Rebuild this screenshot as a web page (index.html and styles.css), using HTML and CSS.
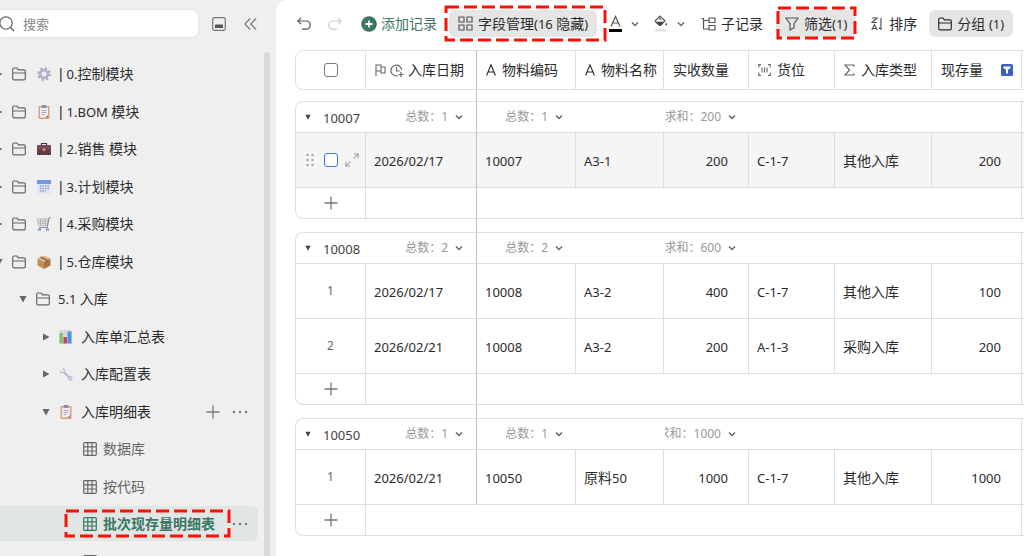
FILE: index.html
```html
<!DOCTYPE html>
<html lang="zh-CN">
<head>
  <meta charset="UTF-8" />
  <title>批次现存量明细表</title>
  <link rel="stylesheet" href="styles.css">
</head>
<body>
  <svg class="sprite" aria-hidden="true">
    <symbol id="folder" viewBox="0 0 14 14"><path d="M.7 11.2V2.4Q.7 1 2.1 1H5l1.6 1.8h5.3q1.4 0 1.4 1.4v7.2q0 1.4-1.4 1.4H2.1Q.7 12.800.7 11.200M.7 6h12.600" fill="none" stroke="currentColor" stroke-width="1.200" /></symbol>
    <symbol id="grid" viewBox="0 0 14 14"><path d="M1.700.7h10.600q1 0 1 1v10.600q0 1-1 1H1.700q-1 0-1-1V1.700q0-1 1-1zM4.800.7v12.600M9 .7v12.600M.7 4.800h12.600M.7 9h12.600" fill="none" stroke="currentColor" stroke-width="1.200" /></symbol>
    <symbol id="right" viewBox="0 0 8 8"><path d="M1 0.500 7.500 4 1 7.500z" fill="currentColor" /></symbol>
    <symbol id="down" viewBox="0 0 8 8"><path d="M.5 1h7L4 7.500z" fill="currentColor" /></symbol>
    <symbol id="chevron" viewBox="0 0 8 8"><path d="M1 2.500 4 5.500 7 2.500" fill="none" stroke="currentColor" stroke-width="1.500" /></symbol>
    <symbol id="plus" viewBox="0 0 14 14"><path d="M7 .5v13M.5 7h13" fill="none" stroke="currentColor" stroke-width="1.300" /></symbol>
    <symbol id="dots" viewBox="0 0 16 14"><g fill="currentColor"><circle cx="2" cy="7" r="1.200" /><circle cx="8" cy="7" r="1.200" /><circle cx="14" cy="7" r="1.200" /></g></symbol>
    <symbol id="text" viewBox="0 0 10 12"><path d="M.6 11.500 5 .8l4.400 10.700M2 8h6" fill="none" stroke="currentColor" stroke-width="1.100" /></symbol>
    <symbol id="clipboard" viewBox="0 0 14 14"><rect x="1.500" y="1" width="11" height="13" rx="1" fill="#d9a27c" /><path d="M3 2.500h8V10l-2.500 2.500H3z" fill="#f1eef8" /><path d="M11 10v2.500H8.500z" fill="#c07a48" /><rect x="4.500" width="5" height="3" rx="1" fill="#8f8ba3" /><path d="M4.500 5.500h5M4.500 7.500h5M4.500 9.500h3" stroke="#a9a3c0" /></symbol>
  </svg>

  <aside class="sidebar">
    <div class="search-bar">
      <label class="search">
        <svg width="15" height="16" viewBox="0 0 15 16"><circle cx="6" cy="7" r="6.200" fill="none" stroke="#666" stroke-width="1.300" /><path d="m10.500 11.500 3.500 3.500" stroke="#666" stroke-width="1.400" /></svg>
        <input type="search" placeholder="搜索" aria-label="搜索" />
      </label>
      <button class="icon-button" aria-label="面板"><svg width="14" height="14" viewBox="0 0 14 14"><rect x=".7" y=".7" width="12.600" height="12.600" rx="1.500" fill="none" stroke="#777" stroke-width="1.200" /><path d="M3 7.500h8v3.500H3z" fill="#555" /></svg></button>
      <button class="icon-button" aria-label="收起"><svg width="13" height="12" viewBox="0 0 13 12"><path d="M6.200.5.8 6l5.400 5.500M12.200.5 6.800 6l5.400 5.500" fill="none" stroke="#777" stroke-width="1.200" /></svg></button>
    </div>

    <div class="tree-wrap">
      <ul class="tree">
        <li><a href="#"><svg class="caret"><use href="#right" /></svg><svg class="icon module"><use href="#folder" /></svg><svg class="emoji" viewBox="0 0 14 14"><circle cx="7" cy="7" r="5.600" fill="none" stroke="#aaa4c2" stroke-width="2.400" stroke-dasharray="2.200" /><circle cx="7" cy="7" r="3.800" fill="none" stroke="#b3adca" stroke-width="2.600" /></svg><span><span class="bar">| </span><span class="num">0.</span>控制模块</span></a></li>
        <li><a href="#"><svg class="caret"><use href="#right" /></svg><svg class="icon module"><use href="#folder" /></svg><svg class="emoji"><use href="#clipboard" /></svg><span><span class="bar">| </span><span class="num">1.BOM </span>模块</span></a></li>
        <li><a href="#"><svg class="caret"><use href="#right" /></svg><svg class="icon module"><use href="#folder" /></svg><svg class="emoji" viewBox="0 0 14 14"><path d="M4.500 3V1.500h5V3" fill="none" stroke="#4a3038" stroke-width="1.200" /><rect y="3" width="14" height="10" rx="1.200" fill="#774b55" /><path d="M0 7.500h14V12q0 1-1 1H1q-1 0-1-1z" fill="#613b46" /><rect x="5.500" y="6.500" width="3" height="2.200" fill="#e3a05b" /></svg><span><span class="bar">| </span><span class="num">2.</span>销售 模块</span></a></li>
        <li><a href="#"><svg class="caret"><use href="#right" /></svg><svg class="icon module"><use href="#folder" /></svg><svg class="emoji" viewBox="0 0 14 14"><rect x=".5" y=".5" width="13" height="13" rx="1" fill="#dfe2f3" /><path d="M0 0h14v4H0z" fill="#6c9be0" /><path d="M3 6h9M3 8.500h9M3 11h6" stroke="#8da3d2" stroke-width="1.500" stroke-dasharray="1.500 1" /></svg><span><span class="bar">| </span><span class="num">3.</span>计划模块</span></a></li>
        <li><a href="#"><svg class="caret"><use href="#right" /></svg><svg class="icon module"><use href="#folder" /></svg><svg class="emoji" viewBox="0 0 14 14"><path d="M.5 2h10.800l-1 6.500H1.500zM.8 4.200h10M1.200 6.300h9M3.500 2v6.500M6 2v6.500M8.500 2v6.500" fill="none" stroke="#aaa9b3" stroke-width=".8" /><path d="M14 .8h-2l-1.700 9.700H2" fill="none" stroke="#88879a" /><path d="M1 12.500h3M9 12.500h3" stroke="#6b94d6" stroke-width="2" /></svg><span><span class="bar">| </span><span class="num">4.</span>采购模块</span></a></li>
        <li><a href="#"><svg class="caret"><use href="#down" /></svg><svg class="icon module"><use href="#folder" /></svg><svg class="emoji" viewBox="0 0 14 14"><path d="m7 .5 6.500 3L7 7 .5 3.500z" fill="#dfb283" /><path d="M.5 3.500 7 7v7L.5 10.500z" fill="#c48e5b" /><path d="M13.500 3.500 7 7v7l6.500-3.500z" fill="#a97343" /><path d="m3.500 2 6.500 3.500V8" fill="none" stroke="#89603c" stroke-width="1.300" /></svg><span><span class="bar">| </span><span class="num">5.</span>仓库模块</span></a></li>
        <li class="level-1"><a href="#"><svg class="caret"><use href="#down" /></svg><svg class="icon"><use href="#folder" /></svg><span><span class="num">5.1 </span>入库</span></a></li>
        <li class="level-2"><a href="#"><svg class="caret"><use href="#right" /></svg><svg class="emoji" viewBox="0 0 14 14"><rect width="13" height="14" rx="1" fill="#d6d7e2" /><path d="M.5 3h3.500v10.500H.5z" fill="#7fc95c" /><path d="M4.500 7H8v6.500H4.500z" fill="#cd3e68" /><path d="M8.500 1.500h4v12h-4z" fill="#4d96e3" /></svg><span>入库单汇总表</span></a></li>
        <li class="level-2"><a href="#"><svg class="caret"><use href="#right" /></svg><svg class="emoji" viewBox="0 0 14 14"><path d="m4.500 5 6 5.500" stroke="#bdb9d4" stroke-width="2.200" /><path d="M3.500 1.500 5.500 3 5 5.500l-2.500.2L1 4M9.800 9.500l2.700.7.500 2-1.200 1-2.300-1z" fill="none" stroke="#bdb9d4" stroke-width="1.300" /></svg><span>入库配置表</span></a></li>
        <li class="level-2"><a href="#"><svg class="caret"><use href="#down" /></svg><svg class="emoji"><use href="#clipboard" /></svg><span>入库明细表</span></a>
          <button class="icon-button" aria-label="新建"><svg width="14" height="14"><use href="#plus" /></svg></button>
          <button class="icon-button" aria-label="更多"><svg width="16" height="14"><use href="#dots" /></svg></button></li>
        <li class="level-3"><a href="#"><svg class="icon"><use href="#grid" /></svg><span>数据库</span></a></li>
        <li class="level-3"><a href="#"><svg class="icon"><use href="#grid" /></svg><span>按代码</span></a></li>
        <li class="level-3 active"><a href="#"><svg class="icon"><use href="#grid" /></svg><span>批次现存量明细表</span></a>
          <button class="icon-button" aria-label="更多"><svg width="16" height="14"><use href="#dots" /></svg></button>
          <svg class="mark mark-view"><rect x="2" y="2" width="163" height="25" /></svg></li>
        <li class="level-3"><a href="#" aria-label="视图"><svg class="icon"><use href="#grid" /></svg></a></li>
      </ul>
      <div class="scrollbar"></div>
    </div>
  </aside>

  <main class="main">
    <div class="toolbar">
      <button class="tool undo" aria-label="撤销"><svg width="14" height="14" viewBox="0 0 14 14"><path d="M4 .8.8 4 4 7.200M1 4h8.500q3.700.5 3.700 4t-3.700 4.200H5" fill="none" stroke="#555" stroke-width="1.200" /></svg></button>
      <button class="tool redo" aria-label="重做"><svg width="14" height="14" viewBox="0 0 14 14"><path d="M10 .8 13.200 4 10 7.200M13 4H4.500Q.8 4.500.8 8t3.700 4.200H9" fill="none" stroke="#ccc" stroke-width="1.200" /></svg></button>
      <button class="tool add"><svg width="16" height="16" viewBox="0 0 16 16"><circle cx="8" cy="8" r="7.800" fill="#3b7566" /><path d="M8 4.500v7M4.500 8h7" stroke="#fff" stroke-width="1.800" /></svg>添加记录</button>
      <button class="tool filled fields"><svg width="15" height="15" viewBox="0 0 15 15"><path d="M1 1h5v5H1zM9 1h5v5H9zM1 9h5v5H1zM9 9h5v5H9z" fill="none" stroke="#555" stroke-width="1.200" /></svg><span>字段管理<span class="num">(16 </span>隐藏<span class="num">)</span></span><svg class="mark mark-fields"><rect x="2" y="2" width="159" height="33" /></svg></button>
      <button class="tool color" aria-label="文字颜色"><svg width="13" height="17" viewBox="0 0 13 17"><path d="M2 11.500 6.500 1.500l4.500 10M3.500 8h6" fill="none" stroke="#555" stroke-width="1.200" /><path d="M0 14h13v3H0z" fill="#000" /></svg><svg class="chev"><use href="#chevron" /></svg></button>
      <button class="tool color" aria-label="填充颜色"><svg width="14" height="17" viewBox="0 0 14 17"><path d="M4.500 2.500 6 1l5 4.800-4.200 4.400q-.8.600-1.600 0L1.600 6.800q-.5-.7 0-1.400L5 2.500 7 5" fill="none" stroke="#555" stroke-width="1.200" /><path d="M2 6.800h8L6 10.500z" fill="#444" /><path d="M12.300 7.500q1.600 2.500 0 3-1.700-.5 0-3z" fill="#444" /><path d="M.5 14h12v2.500H.5z" fill="#e4e4e4" /></svg><svg class="chev"><use href="#chevron" /></svg></button>
      <button class="tool child"><svg width="15" height="14" viewBox="0 0 15 14"><path d="M.5 1.500h2v10.500h5M2.500 3.500h5M8 1h6v4.500H8zM8 8.500h6V13H8z" fill="none" stroke="#555" stroke-width="1.200" /></svg>子记录</button>
      <button class="tool filled filter"><svg width="14" height="14" viewBox="0 0 14 14"><path d="M.8 1h12.400L9 6.700v4L5 13V6.700z" fill="none" stroke="#555" stroke-width="1.200" stroke-linejoin="round" /></svg><span>筛选<span class="num">(1)</span></span><svg class="mark mark-filter"><rect x="2" y="2" width="77" height="30" /></svg></button>
      <button class="tool sort"><svg width="13" height="14" viewBox="0 0 13 14"><path d="M1 1h5L1 5.500h5M.8 13l2.700-5.500L6.200 13M1.800 11.500h3.500M10 1v11.500M7.800 10.500l2.200 2.200" fill="none" stroke="#555" stroke-width="1.200" /></svg>排序</button>
      <button class="tool filled group"><svg width="14" height="14"><use href="#folder" /></svg><span>分组 <span class="num">(1)</span></span></button>
    </div>

    <table class="records">
      <colgroup>
        <col class="w-index"><col class="w-date"><col class="w-code"><col class="w-name"><col class="w-qty"><col class="w-place"><col class="w-type"><col class="w-stock"><col>
      </colgroup>
      <thead>
        <tr>
          <th class="index"><input type="checkbox" aria-label="全选" /></th>
          <th class="frozen"><div class="field date"><svg width="11" height="12" viewBox="0 0 11 12"><path d="M1 12V1h5v6H1M6 3h4v6H6V7" fill="none" stroke="#666" stroke-width="1.100" /></svg><svg width="14" height="13" viewBox="0 0 14 13"><path d="M8 11.700A5.400 5.400 0 1 1 11.700 6M6.500 3v4h3M11 8v5M8.500 10.500h5" fill="none" stroke="#666" stroke-width="1.200" /></svg>入库日期</div></th>
          <th><div class="field"><svg width="10" height="12"><use href="#text" /></svg>物料编码</div></th>
          <th><div class="field"><svg width="10" height="12"><use href="#text" /></svg>物料名称</div></th>
          <th><div class="field">实收数量</div></th>
          <th><div class="field"><svg width="13" height="12" viewBox="0 0 13 12"><path d="M3 .6H.8v3M10 .6h2.200v3M3 11.400H.8v-3M10 11.400h2.200v-3M4 3.500v5M6.500 3.500v5M9 3.500v5" fill="none" stroke="#666" stroke-width="1.100" /></svg>货位</div></th>
          <th><div class="field"><svg width="11" height="12" viewBox="0 0 11 12"><path d="M10 2.800V1H1l4.500 5L1 11h9V9.200" fill="none" stroke="#666" stroke-width="1.200" /></svg>入库类型</div></th>
          <th><div class="field">现存量<svg class="filtered" width="12" height="12" viewBox="0 0 12 12"><rect width="12" height="12" rx="1.500" fill="#3f5fc0" /><path d="M2.500 2.500h7v1.500L7 5.800V9.500H5V5.800L2.500 4z" fill="#fff" /></svg></div></th>
          <th></th>
        </tr>
      </thead>
      <tbody>
        <tr class="gap first"><td colspan="2" class="frozen"></td><td colspan="7"></td></tr>
        <tr class="group-head">
          <td colspan="2" class="frozen"><div class="group-title"><svg class="caret"><use href="#down" /></svg><span>10007</span><button class="stat"><span>总数：1</span><svg class="chev"><use href="#chevron" /></svg></button></div></td>
          <td><button class="stat"><span>总数：1</span><svg class="chev"><use href="#chevron" /></svg></button></td><td></td>
          <td><button class="stat"><span>求和：200</span><svg class="chev"><use href="#chevron" /></svg></button></td><td></td><td></td><td class="edge"></td><td></td>
        </tr>
        <tr class="record hover">
          <td class="index"><div class="row-tools"><svg width="8" height="14" viewBox="0 0 8 14"><g fill="#aaa"><circle cx="1.500" cy="2" r="1.300" /><circle cx="6.500" cy="2" r="1.300" /><circle cx="1.500" cy="7" r="1.300" /><circle cx="6.500" cy="7" r="1.300" /><circle cx="1.500" cy="12" r="1.300" /><circle cx="6.500" cy="12" r="1.300" /></g></svg><input type="checkbox" aria-label="选择记录" /><svg width="14" height="14" viewBox="0 0 14 14"><path d="M8.500 5.500 13 1M9 .8h4.200V5M5.500 8.500 1 13M.8 9v4.200H5" fill="none" stroke="#aaa" stroke-width="1.200" /></svg></div></td>
          <td class="frozen num">2026/02/17</td><td class="num">10007</td><td class="num">A3-1</td><td class="num right">200</td><td class="num">C-1-7</td><td>其他入库</td><td class="num right">200</td><td></td>
        </tr>
        <tr class="append"><td class="index"><button class="icon-button" aria-label="添加记录"><svg width="14" height="14"><use href="#plus" /></svg></button></td><td class="frozen"></td><td colspan="6" class="edge"></td><td></td></tr>
      </tbody>
      <tbody>
        <tr class="gap"><td colspan="2" class="frozen"></td><td colspan="7"></td></tr>
        <tr class="group-head">
          <td colspan="2" class="frozen"><div class="group-title"><svg class="caret"><use href="#down" /></svg><span>10008</span><button class="stat"><span>总数：2</span><svg class="chev"><use href="#chevron" /></svg></button></div></td>
          <td><button class="stat"><span>总数：2</span><svg class="chev"><use href="#chevron" /></svg></button></td><td></td>
          <td><button class="stat"><span>求和：600</span><svg class="chev"><use href="#chevron" /></svg></button></td><td></td><td></td><td class="edge"></td><td></td>
        </tr>
        <tr class="record">
          <td class="index">1</td><td class="frozen num">2026/02/17</td><td class="num">10008</td><td class="num">A3-2</td><td class="num right">400</td><td class="num">C-1-7</td><td>其他入库</td><td class="num right">100</td><td></td>
        </tr>
        <tr class="record">
          <td class="index">2</td><td class="frozen num">2026/02/21</td><td class="num">10008</td><td class="num">A3-2</td><td class="num right">200</td><td class="num">A-1-3</td><td>采购入库</td><td class="num right">200</td><td></td>
        </tr>
        <tr class="append"><td class="index"><button class="icon-button" aria-label="添加记录"><svg width="14" height="14"><use href="#plus" /></svg></button></td><td class="frozen"></td><td colspan="6" class="edge"></td><td></td></tr>
      </tbody>
      <tbody>
        <tr class="gap"><td colspan="2" class="frozen"></td><td colspan="7"></td></tr>
        <tr class="group-head">
          <td colspan="2" class="frozen"><div class="group-title"><svg class="caret"><use href="#down" /></svg><span>10050</span><button class="stat"><span>总数：1</span><svg class="chev"><use href="#chevron" /></svg></button></div></td>
          <td><button class="stat"><span>总数：1</span><svg class="chev"><use href="#chevron" /></svg></button></td><td></td>
          <td><button class="stat"><span>求和：1000</span><svg class="chev"><use href="#chevron" /></svg></button></td><td></td><td></td><td class="edge"></td><td></td>
        </tr>
        <tr class="record">
          <td class="index">1</td><td class="frozen num">2026/02/21</td><td class="num">10050</td><td>原料<span class="num">50</span></td><td class="num right">1000</td><td class="num">C-1-7</td><td>其他入库</td><td class="num right">1000</td><td></td>
        </tr>
        <tr class="append"><td class="index"><button class="icon-button" aria-label="添加记录"><svg width="14" height="14"><use href="#plus" /></svg></button></td><td></td><td colspan="6" class="edge"></td><td></td></tr>
      </tbody>
    </table>
  </main>
</body>
</html>
```
FILE: styles.css
```css
* {
  box-sizing: border-box;
}

body {
  margin: 0;
  height: 100vh;
  display: flex;
  overflow: hidden;
  background: #efefef;
  color: #2b2b2b;
  font-family: "Noto Sans", "Noto Sans CJK SC", sans-serif;
  font-size: 14px;
  line-height: 20px;
}

svg {
  display: block;
  flex: none;
}

button {
  border: none;
  padding: 0;
  background: none;
  color: inherit;
  font: inherit;
  cursor: pointer;
}

.sprite {
  position: absolute;
  width: 0;
  height: 0;
}

.icon-button {
  flex: none;
  color: #777;
}

.caret,
.chev {
  width: 8px;
  height: 8px;
}

.chev {
  color: #666;
}

.num {
  font-size: 13px;
}

/* sidebar */

.sidebar {
  flex: none;
  width: 276px;
  display: flex;
  flex-direction: column;
}

.search-bar {
  display: flex;
  align-items: center;
  gap: 18px;
  padding: 10px 19px 0 0;
}

.search {
  flex: 1;
  display: flex;
  align-items: center;
  gap: 8px;
  height: 27px;
  margin-right: -4px;
  border-radius: 0 6px 6px 0;
  background: #fff;
  box-shadow: 0 0 2px #ccc;
}

.search input {
  width: 100%;
  border: none;
  padding: 0;
  outline: none;
  background: none;
  font: inherit;
  font-size: 13px;
}

.search input::placeholder {
  color: #888;
}

.tree-wrap {
  flex: 1;
  min-height: 0;
  display: flex;
  gap: 6px;
  padding: 15px 6px 0 0;
}

.tree {
  flex: 1;
  margin: 4px 0 0;
  padding: 0;
  overflow: hidden;
  list-style: none;
}

.tree li {
  position: relative;
  display: flex;
  align-items: center;
  gap: 12px;
  height: 35px;
  margin-bottom: 3px;
  padding-right: 10px;
  border-radius: 0 6px 6px 0;
}

.tree li:nth-child(even) {
  margin-bottom: 2px;
}

.tree a {
  flex: 1;
  display: flex;
  align-items: center;
  margin-left: -5px;
  color: inherit;
  text-decoration: none;
  white-space: nowrap;
}

.tree .level-1 a {
  padding-left: 24px;
}

.tree .level-2 a {
  padding-left: 47px;
}

.tree .level-3 a {
  padding-left: 88px;
  color: #666;
}

.tree .caret {
  margin-right: 9px;
  color: #666;
}

.icon,
.emoji {
  width: 14px;
  height: 14px;
  margin-right: 8px;
  color: #666;
}

.icon.module {
  margin-right: 11px;
}

.level-3 .icon {
  margin-right: 6px;
}

.bar {
  font-family: "Liberation Sans", sans-serif;
}

.tree .active {
  background: #e0e6e3;
}

.tree .active a,
.tree .active .icon {
  color: #3b7566;
}

.tree .active a {
  font-weight: bold;
}

.scrollbar {
  width: 6px;
  border-radius: 3px 3px 0 0;
  background: #d9d9d9;
}

/* dashed highlight boxes */

.mark {
  position: absolute;
  overflow: visible;
  pointer-events: none;
}

.mark rect {
  fill: none;
  stroke: #fb1207;
  stroke-width: 3;
  stroke-dasharray: 13 5;
}

.mark-view {
  left: 64px;
  top: 3px;
  width: 167px;
  height: 29px;
}

.mark-fields {
  left: -5px;
  top: -5px;
  width: 163px;
  height: 37px;
}

.mark-filter {
  left: 0;
  top: -4px;
  width: 81px;
  height: 34px;
}

/* toolbar */

.main {
  flex: 1;
  min-width: 0;
  overflow: hidden;
  padding: 10px 0 0 19px;
  border-radius: 12px 0 0 0;
  background: #fff;
}

.toolbar {
  display: flex;
  align-items: center;
  height: 27px;
  margin-bottom: 13px;
}

.tool {
  position: relative;
  flex: none;
  display: flex;
  align-items: center;
  gap: 5px;
  height: 27px;
  white-space: nowrap;
}

.filled {
  padding: 0 9px;
  border-radius: 6px;
  background: #e5e5e5;
}

.undo {
  margin-left: 2px;
}

.redo {
  margin-left: 17px;
}

.add {
  margin-left: 19px;
  gap: 4px;
  color: #3b7566;
}

.fields {
  margin-left: 12px;
}

.color {
  gap: 9px;
  margin-left: 12px;
}

.color + .color {
  margin-left: 15px;
}

.child {
  margin-left: 16px;
}

.filter {
  margin-left: 13px;
}

.sort {
  margin-left: 15px;
}

.group {
  margin-left: 12px;
}

/* records table */

.records {
  width: 100%;
  table-layout: fixed;
  border-spacing: 0;
}

.w-index { width: 71px; }
.w-date { width: 111px; }
.w-code { width: 99px; }
.w-name { width: 88px; }
.w-qty { width: 85px; }
.w-place { width: 86px; }
.w-type { width: 97px; }
.w-stock { width: 90px; }

th,
td {
  padding: 0;
  border: 0 solid #dedede;
  text-align: left;
  font-weight: normal;
  white-space: nowrap;
}

th {
  height: 40px;
  border-width: 1px 1px 1px 0;
}

th:first-child {
  border-left-width: 1px;
  border-radius: 8px 0 0 8px;
}

.field {
  display: flex;
  align-items: center;
  gap: 6px;
  padding-left: 9px;
}

.field.date {
  gap: 4px;
}

.filtered {
  margin-left: 12px;
}

.gap td {
  height: 13px;
}

.gap.first td {
  height: 11px;
}

.group-head td {
  height: 32px;
  border-width: 1px 0;
}

.group-head td:first-child {
  border-left-width: 1px;
  border-radius: 8px 0 0 0;
}

.group-title {
  display: flex;
  align-items: center;
  padding-left: 8px;
  color: #444;
  font-size: 13px;
}

.group-title .caret {
  margin-right: 11px;
  padding: 1px;
}

.group-title span {
  padding-top: 2px;
}

.stat {
  display: flex;
  align-items: center;
  justify-content: flex-end;
  gap: 7px;
  width: 100%;
  padding-right: 13px;
  color: #999;
  font-size: 12px;
}

.group-title .stat {
  flex: 1;
}

.stat span {
  display: flex;
  justify-content: flex-end;
  max-width: 56px;
  padding: 0;
  overflow: hidden;
}

.record td {
  height: 55px;
  padding: 2px 0 0 8px;
  border-width: 0 1px 1px 0;
}

.record td.right {
  padding-right: 20px;
  text-align: right;
}

.record.hover td {
  background: #f5f5f5;
}

.append td {
  height: 31px;
  border-bottom-width: 1px;
}

.append td:first-child {
  border-radius: 0 0 0 8px;
}

th.index,
.record .index,
.append .index {
  padding: 0;
  border-left-width: 1px;
  border-right-width: 1px;
  text-align: center;
}

.record .index {
  color: #666;
  font-size: 12px;
}

.append .index {
  padding-top: 3px;
}

.append svg {
  margin: 0 auto;
}

th.frozen,
.records td.frozen {
  border-right: 1px solid #b9bfcc;
}

.records .edge {
  border-right-width: 1px;
}

.records th:last-child,
.records td:last-child {
  border-right-width: 0;
}

.row-tools {
  display: flex;
  align-items: center;
  padding-left: 10px;
}

input[type="checkbox"] {
  display: block;
  appearance: none;
  width: 14px;
  height: 14px;
  margin: 0 auto;
  border: 1px solid #777;
  border-radius: 3px;
  background: #fff;
}

.row-tools input[type="checkbox"] {
  margin: 0 7px 0 10px;
  border-color: #4571e0;
}
```
